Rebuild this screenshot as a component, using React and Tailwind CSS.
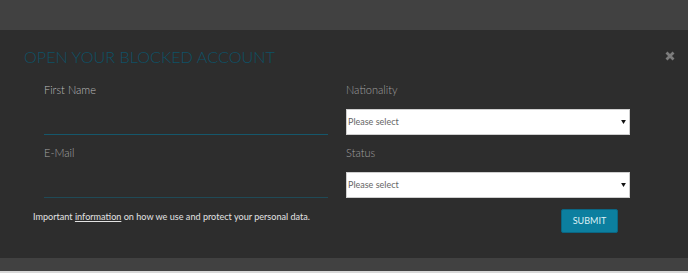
export default function App() {
  const font = { fontFamily: "Lato, 'Open Sans', sans-serif" };
  return (
    <div className="w-[688px] h-[273px] bg-[#414141] flex flex-col overflow-hidden" style={font}>
      <div className="h-[30px] shrink-0 bg-[#414141]" />
      <div className="relative h-[228px] shrink-0 bg-[#2d2d2d] pt-[17px]">
        <h2 className="pl-[24px] text-[16.2px] leading-[20px] font-light text-[#0e5166]">
          OPEN YOUR BLOCKED ACCOUNT
        </h2>
        <button className="absolute left-[665px] top-[21px] w-[10px] h-[10px]" aria-label="Close">
          <svg viewBox="0 0 10 10" className="w-[10px] h-[10px] block">
            <path d="M1.5 1.5 L8.5 8.5 M8.5 1.5 L1.5 8.5" stroke="#7c7c7c" strokeWidth="2.8" strokeLinecap="butt" />
          </svg>
        </button>
        <div className="mt-[15px] pl-[44px] grid grid-cols-[284px_284px] gap-x-[18px] gap-y-[10px]">
          <div>
            <label className="block h-[16px] text-[11px] leading-[16px] font-light text-[#bcbcbc]">First Name</label>
            <div className="mt-[11px] h-[26px] border-b border-[#15576b]" />
          </div>
          <div>
            <label className="block h-[16px] text-[11px] leading-[16px] font-light text-[#a0a0a0]">Nationality</label>
            <div className="mt-[11px] h-[26px] bg-white border border-[#cfcfcf] flex items-center justify-between pl-[1px] pr-[3px]">
              <span className="text-[9px] leading-[12px] text-[#666666]">Please select</span>
              <svg viewBox="0 0 6 5" className="w-[5px] h-[4px] block">
                <path d="M0 0 H6 L3 5 Z" fill="#111" />
              </svg>
            </div>
          </div>
          <div>
            <label className="block h-[16px] text-[11px] leading-[16px] font-light text-[#a4a4a4]">E-Mail</label>
            <div className="mt-[11px] h-[26px] border-b border-[#1f4a57]" />
          </div>
          <div>
            <label className="block h-[16px] text-[11px] leading-[16px] font-light text-[#a0a0a0]">Status</label>
            <div className="mt-[11px] h-[26px] bg-white border border-[#cfcfcf] flex items-center justify-between pl-[1px] pr-[3px]">
              <span className="text-[9px] leading-[12px] text-[#666666]">Please select</span>
              <svg viewBox="0 0 6 5" className="w-[5px] h-[4px] block">
                <path d="M0 0 H6 L3 5 Z" fill="#111" />
              </svg>
            </div>
          </div>
        </div>
        <div className="mt-[11px] pl-[33px] pr-[70px] flex justify-between items-start">
          <p className="pt-[1px] text-[9.1px] leading-[14px] text-[#e2e2e2]">
            Important <span className="underline">information</span> on how we use and protect your personal data.
          </p>
          <button className="w-[57px] h-[24px] bg-[#0c7f9f] border border-[#0a6683] rounded-[2px] text-[9px] leading-[12px] text-[#dff1f6] flex items-center justify-center">
            SUBMIT
          </button>
        </div>
      </div>
      <div className="h-[13px] shrink-0 bg-[#414141]" />
      <div className="h-[2px] shrink-0 bg-[#d8d8d8]" />
    </div>
  );
}
